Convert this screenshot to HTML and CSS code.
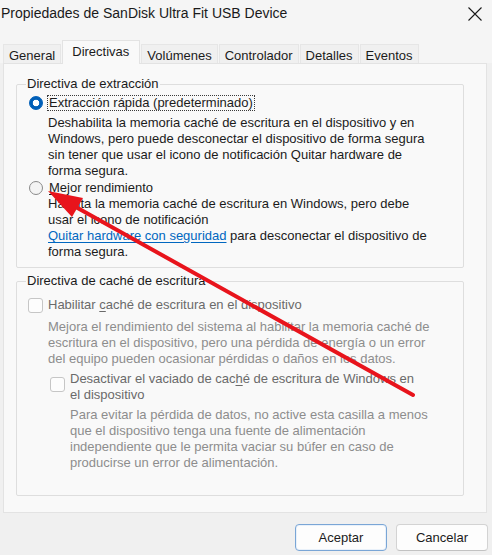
FILE: index.html
```html
<!DOCTYPE html>
<html lang="es">
<head>
<meta charset="utf-8">
<title>Propiedades de SanDisk Ultra Fit USB Device</title>
<link rel="stylesheet" href="styles.css">
</head>
<body>
<div class="window">
  <header class="titlebar">
    <span class="title">Propiedades de SanDisk Ultra Fit USB Device</span>
    <span class="close" aria-label="Cerrar">
      <svg width="14" height="14" viewBox="0 0 14 14"><path d="M0.5 0.5 L13.5 13.5 M13.5 0.5 L0.5 13.5" stroke="#1a1a1a" stroke-width="1.1" fill="none"/></svg>
    </span>
  </header>

  <nav class="tabs">
    <span class="tab">General</span>
    <span class="tab active">Directivas</span>
    <span class="tab">Volúmenes</span>
    <span class="tab">Controlador</span>
    <span class="tab">Detalles</span>
    <span class="tab">Eventos</span>
  </nav>

  <section class="panel">
    <fieldset class="group removal">
      <legend>Directiva de extracción</legend>
      <div class="option">
        <span class="radio checked"></span>
        <span class="label focused">Extracción rápida (predeterminado)</span>
      </div>
      <p class="desc first">Deshabilita la memoria caché de escritura en el dispositivo y en<br>Windows, pero puede desconectar el dispositivo de forma segura<br>sin tener que usar el icono de notificación Quitar hardware de<br>forma segura.</p>
      <div class="option second">
        <span class="radio"></span>
        <span class="label"><u>M</u>ejor rendimiento</span>
      </div>
      <p class="desc">Habilita la memoria caché de escritura en Windows, pero debe<br>usar el icono de notificación<br><a class="link" href="#">Quitar hardware con seguridad</a> para desconectar el dispositivo de<br>forma segura.</p>
    </fieldset>

    <fieldset class="group cache">
      <legend>Directiva de caché de escritura</legend>
      <div class="check">
        <span class="box"></span>
        <span class="label muted">Habilitar <u>c</u>aché de escritura en el dispositivo</span>
      </div>
      <p class="desc faint">Mejora el rendimiento del sistema al habilitar la memoria caché de<br>escritura en el dispositivo, pero una pérdida de energía o un error<br>del equipo pueden ocasionar pérdidas o daños en los datos.</p>
      <div class="check nested">
        <span class="box"></span>
        <span class="label muted">Desactivar el vaciado de cac<u>h</u>é de escritura de Windows en<br>el dispositivo</span>
      </div>
      <p class="desc faint nested-desc">Para evitar la pérdida de datos, no active esta casilla a menos<br>que el dispositivo tenga una fuente de alimentación<br>independiente que le permita vaciar su búfer en caso de<br>producirse un error de alimentación.</p>
    </fieldset>
  </section>

  <footer class="actions">
    <button class="btn default">Aceptar</button>
    <button class="btn">Cancelar</button>
  </footer>

  <!-- red callout arrow drawn over the dialog -->
  <svg class="callout" width="492" height="555" viewBox="0 0 492 555">
    <line x1="413" y1="395" x2="74" y2="206" stroke="#e8141c" stroke-width="4" stroke-linecap="round"/>
    <polygon points="48,191 72,217 83,198" fill="#e8141c"/>
  </svg>
</div>
</body>
</html>
```

FILE: styles.css
```css
* { box-sizing: border-box; }

html, body {
  margin: 0;
  padding: 0;
}

body {
  width: 492px;
  height: 555px;
  overflow: hidden;
  background: #f0f0f0;
  font-family: "Liberation Sans", Arial, sans-serif;
  font-size: 13px;
  color: #1b1b1b;
}

.window {
  position: relative;
  width: 492px;
  height: 555px;
  background: #f0f0f0;
}

/* title bar */
.titlebar {
  height: 40px;
  display: flex;
  align-items: flex-start;
  justify-content: space-between;
  padding: 5px 10px 0 1px;
  background: #f5f5f5;
}

.title {
  font-size: 14px;
  line-height: 16px;
  color: #1a1a1a;
}

.close {
  display: flex;
  margin-top: 2px;
}

/* tab strip */
.tabs {
  display: flex;
  align-items: flex-end;
  gap: 1px;
  height: 23px;
  padding-left: 3px;
  background: #f5f5f5;
}

.tab {
  height: 19px;
  padding: 2px 5px 0;
  line-height: 17px;
  color: #1b1b1b;
  background: #f0f0f0;
  border: 1px solid #e6e6e6;
  border-bottom: none;
}

.tab.active {
  position: relative;
  z-index: 1;
  height: 24px;
  margin-bottom: -1px;
  padding: 3px 10px 0 9px;
  line-height: 16px;
  background: #f9f9f9;
  border-color: #e3e3e3;
}

/* tab page */
.panel {
  width: 484px;
  height: 450px;
  margin-left: 3px;
  padding: 12px 22px 0 12px;
  background: #f9f9f9;
  border: 1px solid #e3e3e3;
}

.group {
  margin: 0;
  min-width: 0;
  border: 1px solid #dedede;
  border-radius: 2px;
  padding: 3px 10px 7px 9px;
}

.group legend {
  padding: 0 1px;
  line-height: 16px;
  color: #1b1b1b;
}

.group.cache {
  margin-top: 5px;
  padding-top: 8px;
  padding-bottom: 24px;
}

.option,
.check {
  display: flex;
  align-items: center;
  line-height: 16px;
}

.option.second {
  margin-top: 1px;
}

.radio {
  width: 14px;
  height: 14px;
  margin: 0 4px 0 3px;
  border-radius: 50%;
  border: 1px solid #8a8a8a;
  background: #f4f4f4;
  flex: none;
}

.radio.checked {
  border-color: #005fb8;
  background: radial-gradient(circle, #ffffff 0 3px, #005fb8 3.6px);
}

.label {
  padding: 0 1px;
  border: 1px solid transparent;
  line-height: 14px;
}

.label.focused {
  border: 1px dotted #3a3a3a;
}

.label u {
  text-decoration-thickness: 1px;
  text-underline-offset: 2px;
}

.desc {
  margin: 0 0 0 22px;
  line-height: 16px;
}

.desc.first {
  margin-top: 4px;
}

.link {
  color: #0067c0;
  text-decoration: underline;
  text-underline-offset: 2px;
}

/* disabled checkbox rows */
.box {
  width: 15px;
  height: 15px;
  margin: 0 4px 0 2px;
  border: 1px solid #c6c6c6;
  border-radius: 3px;
  background: #fdfdfd;
  flex: none;
}

.check .label {
  line-height: 16px;
  border: none;
  padding: 0 0 0 1px;
}

.muted { color: #6a6a6a; }

.faint {
  color: #8d8d8d;
}

.check + .desc {
  margin-top: 6px;
}

.check.nested {
  align-items: flex-start;
  margin: 4px 0 0 24px;
}

.check.nested .box {
  margin: 6px 4px 0 0;
}

.desc.nested-desc {
  margin: 4px 0 0 44px;
}

/* dialog buttons */
.actions {
  display: flex;
  justify-content: flex-end;
  gap: 9px;
  padding: 11px 4px 0 0;
}

.btn {
  width: 92px;
  height: 27px;
  font-family: inherit;
  font-size: 13px;
  color: #1b1b1b;
  background: #fdfdfd;
  border: 1px solid #d3d3d3;
  border-bottom-color: #c2c2c2;
  border-radius: 4px;
  padding: 0;
}

.btn.default {
  border-color: #7aa6d6;
  box-shadow: inset 0 0 0 1px #e9f1fa;
}

/* overlay arrow */
.callout {
  position: absolute;
  top: 0;
  left: 0;
  pointer-events: none;
}
```
